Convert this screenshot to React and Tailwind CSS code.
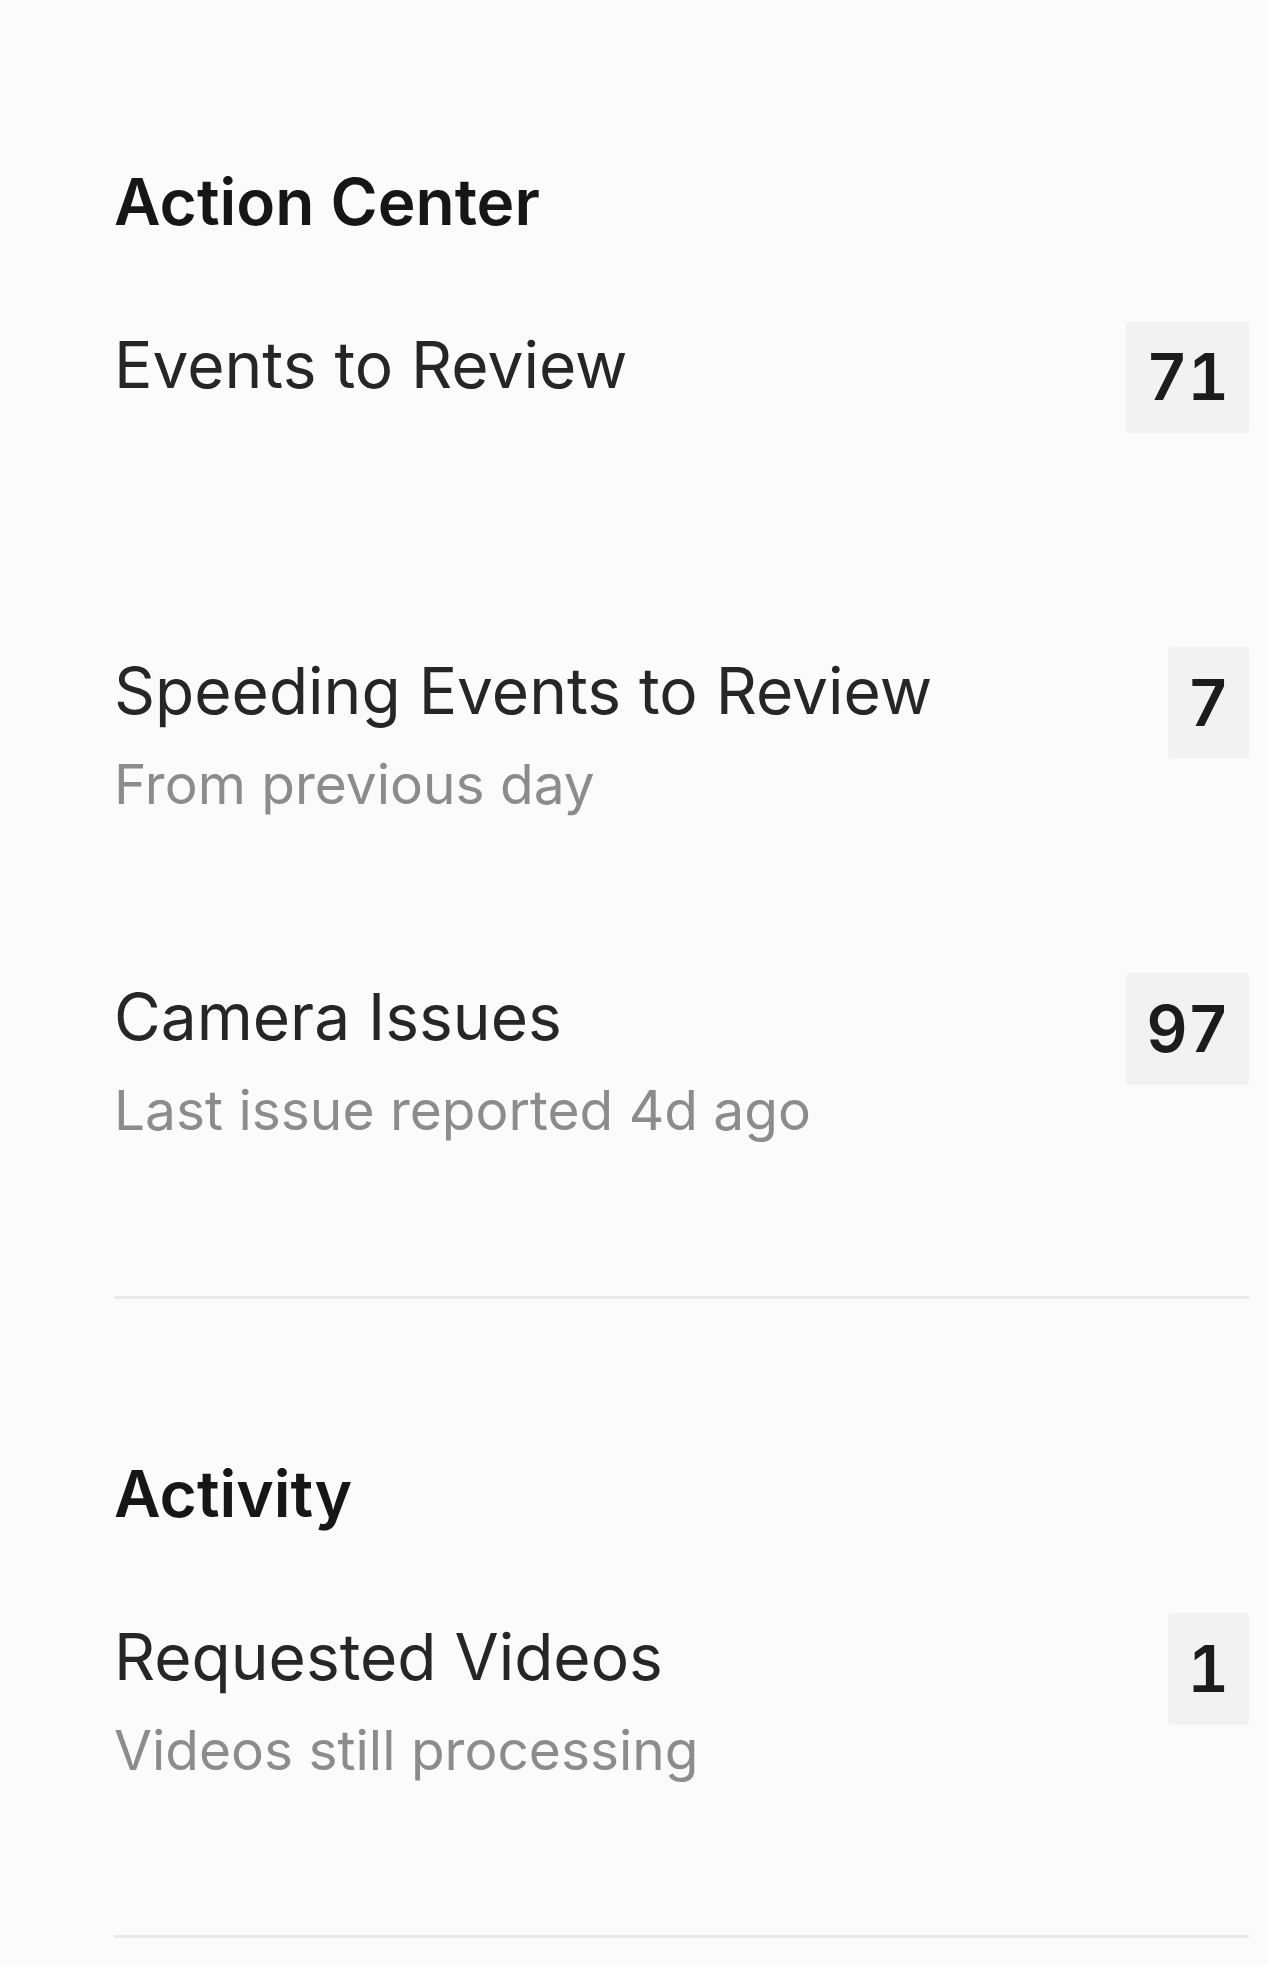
import React from 'react';

const font = { fontFamily: 'Inter, "Noto Sans", sans-serif' };

const Badge = ({ value }) => (
  <span className="shrink-0 rounded-[4px] bg-[#f2f2f2] px-5 py-2 text-[64px] font-semibold leading-[96px] tabular-nums text-[#1c1c1c]">
    {value}
  </span>
);

const Row = ({ title, subtitle, count }) => (
  <div className="flex items-start justify-between">
    <div className="flex flex-col">
      <span className="text-[64px] leading-[88px] text-[#262626]">{title}</span>
      <span className="min-h-[98px] text-[55px] leading-[98px] text-[#8c8c8c]">{subtitle}</span>
    </div>
    <Badge value={count} />
  </div>
);

const Section = ({ title, children }) => (
  <section className="flex flex-col">
    <h2 className="text-[64px] font-semibold leading-[88px] text-[#161616]">{title}</h2>
    <div className="mt-[75px] flex flex-col gap-[140px]">{children}</div>
  </section>
);

export default function App() {
  return (
    <div className="min-h-screen bg-[#fbfbfb] pl-[114px] pr-[19px] pt-[158px]" style={font}>
      <Section title="Action Center">
        <Row title="Events to Review" count="71" />
        <Row title="Speeding Events to Review" subtitle="From previous day" count="7" />
        <Row title="Camera Issues" subtitle="Last issue reported 4d ago" count="97" />
      </Section>
      <div className="mt-[137px] border-t-[3px] border-[#e9e9e9]" />
      <div className="pt-[151px]">
        <Section title="Activity">
          <Row title="Requested Videos" subtitle="Videos still processing" count="1" />
        </Section>
      </div>
      <div className="mt-[136px] border-t-[3px] border-[#e9e9e9]" />
    </div>
  );
}
